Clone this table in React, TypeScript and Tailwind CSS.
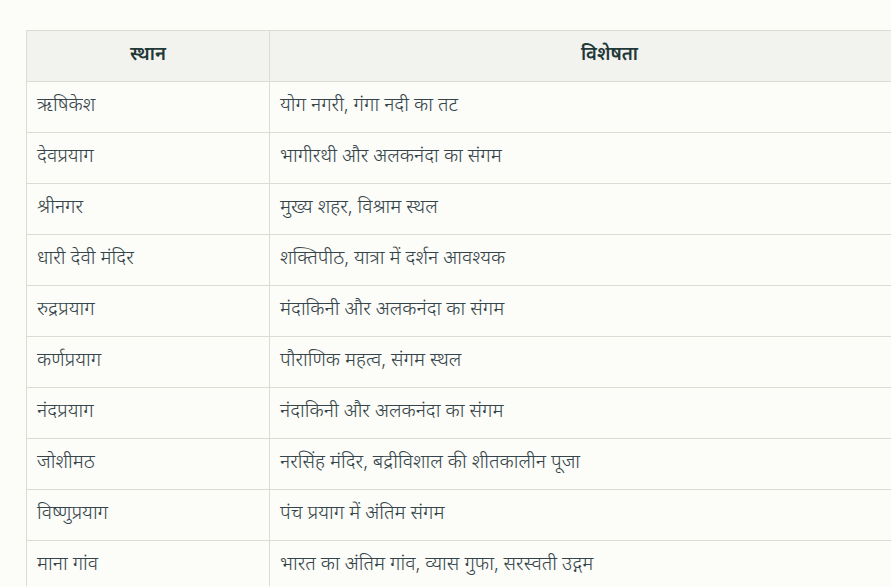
const rows: [string, string][] = [
  ['ऋषिकेश', 'योग नगरी, गंगा नदी का तट'],
  ['देवप्रयाग', 'भागीरथी और अलकनंदा का संगम'],
  ['श्रीनगर', 'मुख्य शहर, विश्राम स्थल'],
  ['धारी देवी मंदिर', 'शक्तिपीठ, यात्रा में दर्शन आवश्यक'],
  ['रुद्रप्रयाग', 'मंदाकिनी और अलकनंदा का संगम'],
  ['कर्णप्रयाग', 'पौराणिक महत्व, संगम स्थल'],
  ['नंदप्रयाग', 'नंदाकिनी और अलकनंदा का संगम'],
  ['जोशीमठ', 'नरसिंह मंदिर, बद्रीविशाल की शीतकालीन पूजा'],
  ['विष्णुप्रयाग', 'पंच प्रयाग में अंतिम संगम'],
  ['माना गांव', 'भारत का अंतिम गांव, व्यास गुफा, सरस्वती उद्गम'],
];

export default function App() {
  return (
    <div
      className="h-[586px] w-[891px] overflow-hidden bg-[#fcfcf8] pl-[26px] pt-[30px] text-[#34444a]"
      style={{ fontFamily: '"Noto Sans Devanagari", "Noto Sans", "Liberation Sans", sans-serif' }}
    >
      <table className="w-[924px] table-fixed border-collapse text-[19.5px]">
        <colgroup>
          <col className="w-[243px]" />
          <col />
        </colgroup>
        <thead>
          <tr className="h-[51px] bg-[#f2f2ee]">
            <th className="border border-[#dcdcd5] px-[10px] text-center text-[18.5px] font-semibold text-[#1f3838]">स्थान</th>
            <th className="border border-[#dcdcd5] px-[10px] text-center text-[18.5px] font-semibold text-[#1f3838]">विशेषता</th>
          </tr>
        </thead>
        <tbody>
          {rows.map(([place, note]) => (
            <tr key={place} className="h-[51px]">
              <td className="border border-[#dcdcd5] px-[10px] text-left font-light">{place}</td>
              <td className="border border-[#dcdcd5] px-[10px] text-left font-light">{note}</td>
            </tr>
          ))}
        </tbody>
      </table>
    </div>
  );
}
